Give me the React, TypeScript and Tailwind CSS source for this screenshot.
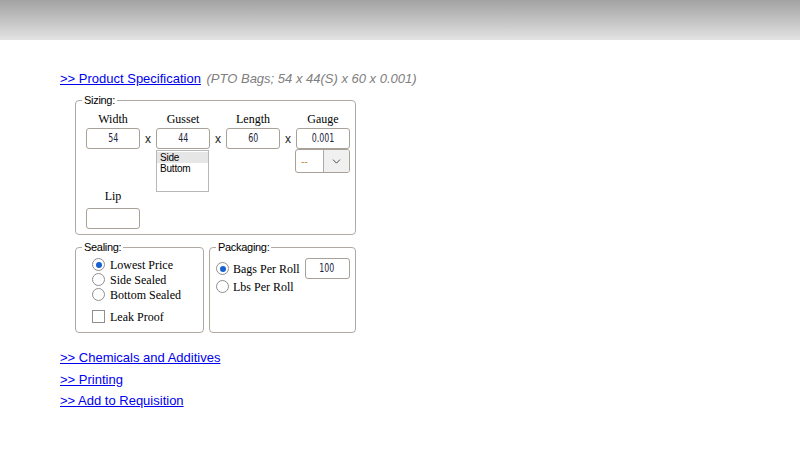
import { ChevronDown } from "lucide-react";

const sans = "font-['Liberation_Sans',Arial,sans-serif]";
const serif = "font-['Liberation_Serif','Times_New_Roman',serif]";
const narrow = "font-['Liberation_Sans_Narrow','DejaVu_Sans_Condensed',sans-serif]";

function Digits({ value }: { value: string }) {
  return <span className={`inline-block scale-x-[0.7] text-[12.5px] text-[#1c2440] ${narrow}`}>{value}</span>;
}

function Field({ value = "" }: { value?: string }) {
  return (
    <div className="flex h-[21px] w-[54px] items-center justify-center rounded-[3px] border border-[#a8a198] bg-white">
      {value && <Digits value={value} />}
    </div>
  );
}

function Radio({ checked = false }: { checked?: boolean }) {
  return (
    <span className="flex h-[13px] w-[13px] shrink-0 items-center justify-center rounded-full border border-[#8f8f8f] bg-white">
      {checked && <span className="h-[6px] w-[6px] rounded-full bg-[#1a5fd0]" />}
    </span>
  );
}

function X() {
  return <div className={`flex h-[21px] items-center justify-center text-[12px] text-[#222] ${sans}`}>x</div>;
}

function Label({ children }: { children: string }) {
  return <div className={`h-[14px] text-center text-[12px] leading-[14px] text-black ${serif}`}>{children}</div>;
}

export default function App() {
  return (
    <div className="min-h-[450px] bg-white">
      <div className="h-10 bg-gradient-to-b from-[#a2a2a2] to-[#e3e3e3]" />

      <div className={`pl-[60px] pt-[31px] ${sans}`}>
        <div className="h-[16px] text-[13px] leading-[16px]">
          <a href="#" className="text-[#0000ee] underline">&gt;&gt; Product Specification</a>
          <span className="ml-[2px] italic text-[#808080]"> (PTO Bags; 54 x 44(S) x 60 x 0.001)</span>
        </div>

        <div className="ml-[15px] mt-[7px] w-[281px]">
          <fieldset className="rounded-[4px] border border-[#b0aaa2] pb-[5px] pl-[10px] pr-[5px] pt-[6px]">
            <legend className="ml-[-4px] px-[2px] text-[11px] leading-[12px] tracking-[-0.3px] text-black">Sizing:</legend>

            <div className="grid grid-cols-[54px_16px_54px_16px_54px_16px_54px]">
              <Label>Width</Label>
              <div />
              <Label>Gusset</Label>
              <div />
              <Label>Length</Label>
              <div />
              <Label>Gauge</Label>

              <div className="col-span-7 h-[2px]" />

              <Field value="54" />
              <X />
              <Field value="44" />
              <X />
              <Field value="60" />
              <X />
              <Field value="0.001" />

              <div className="h-[40px]" />
              <div />
              <div className="h-[40px] pt-[1px]">
                <div className="h-[42px] w-[53px] border border-[#b8b8b8] bg-white pt-[1px] text-[10px] leading-[11px] tracking-[-0.2px] text-black">
                  <div className="bg-[#e6e6e6] pl-[3px]">Side</div>
                  <div className="pl-[3px]">Buttom</div>
                </div>
              </div>
              <div />
              <div />
              <div />
              <div className="ml-[-1px] h-[40px]">
                <div className="flex h-[24px] w-[55px] overflow-hidden rounded-[3px] border border-[#a8a198] bg-white">
                  <div className="flex flex-1 items-center pl-[5px] text-[10px] text-[#c8843e]">--</div>
                  <div className="flex w-[26px] items-center justify-center border-l border-[#b0aaa2] bg-[#f0f0f0]">
                    <ChevronDown size={13} strokeWidth={1.6} className="text-[#333]" />
                  </div>
                </div>
              </div>
            </div>

            <div className="w-[54px]">
              <Label>Lip</Label>
              <div className="mt-[5px]">
                <Field />
              </div>
            </div>
          </fieldset>

          <div className="mt-[6px] flex gap-[5px]">
            <fieldset className="w-[129px] rounded-[4px] border border-[#b0aaa2] pb-[8px] pl-[16px] pt-[4px]">
              <legend className="ml-[-10px] px-[2px] text-[11px] leading-[12px] tracking-[-0.3px] text-black">Sealing:</legend>
              {[
                ["Lowest Price", true],
                ["Side Sealed", false],
                ["Bottom Sealed", false],
              ].map(([t, c]) => (
                <div key={t as string} className={`flex h-[15px] items-center gap-[5px] text-[12px] text-black ${serif}`}>
                  <Radio checked={c as boolean} />
                  <span>{t as string}</span>
                </div>
              ))}
              <div className={`mt-[7px] flex h-[15px] items-center gap-[5px] text-[12px] text-black ${serif}`}>
                <span className="h-[13px] w-[13px] border border-[#8f8f8f] bg-white" />
                <span>Leak Proof</span>
              </div>
            </fieldset>

            <fieldset className="w-[147px] rounded-[4px] border border-[#b0aaa2] pl-[6px] pt-[5px]">
              <legend className="px-[2px] text-[11px] leading-[12px] tracking-[-0.3px] text-black">Packaging:</legend>
              <div className={`flex h-[21px] items-center text-[12px] text-black ${serif}`}>
                <Radio checked />
                <span className="ml-[4px]">Bags Per Roll</span>
                <div className="ml-[5px] flex h-[21px] w-[45px] items-center justify-center rounded-[3px] border border-[#a8a198] bg-white">
                  <Digits value="100" />
                </div>
              </div>
              <div className={`flex h-[15px] items-center text-[12px] text-black ${serif}`}>
                <Radio />
                <span className="ml-[4px]">Lbs Per Roll</span>
              </div>
            </fieldset>
          </div>
        </div>

        <div className="mt-[17px] flex flex-col gap-[5.5px] text-[13px] leading-[16px]">
          <a href="#" className="w-fit text-[#0000ee] underline">&gt;&gt; Chemicals and Additives</a>
          <a href="#" className="w-fit text-[#0000ee] underline">&gt;&gt; Printing</a>
          <a href="#" className="w-fit text-[#0000ee] underline">&gt;&gt; Add to Requisition</a>
        </div>
      </div>
    </div>
  );
}
